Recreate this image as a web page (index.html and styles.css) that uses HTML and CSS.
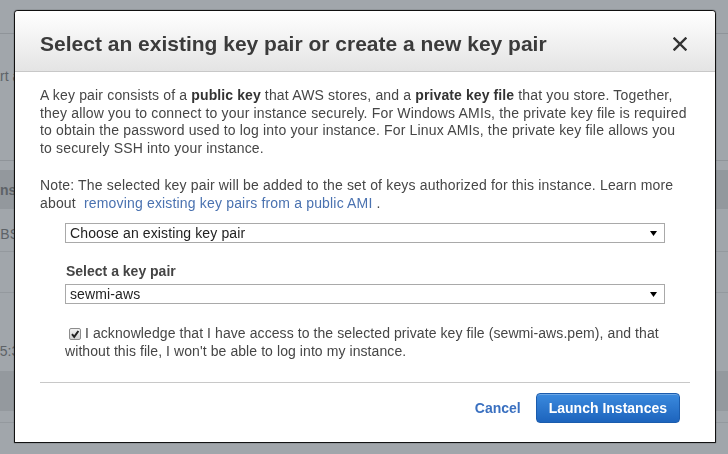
FILE: index.html
```html
<!DOCTYPE html>
<html lang="en">
<head>
<meta charset="utf-8">
<title>Select key pair</title>
<link rel="stylesheet" href="styles.css">
</head>
<body>
<div class="page">
  <div class="bg-top"></div>
  <div class="bg-sec"><span class="bg-text t1">Start a</span></div>
  <div class="bg-gap"></div>
  <div class="bg-head"><span class="bg-text bold t2">Inst</span></div>
  <div class="bg-row r1"><span class="bg-text t3">EBS</span></div>
  <div class="bg-row r2"></div>
  <div class="bg-row r3"><span class="bg-text t4">05:3</span></div>
  <div class="bg-band"></div>
  <div class="bg-row r4"></div>
</div>

<div class="overlay">
  <div class="dialog">
    <div class="dlg-header">
      <h1 class="dlg-title">Select an existing key pair or create a new key pair</h1>
      <svg class="close" width="14" height="14" viewBox="0 0 14 14" aria-label="Close">
        <path d="M1.5 1.5 L12.5 12.5 M12.5 1.5 L1.5 12.5" stroke="#333" stroke-width="2.4" stroke-linecap="square" fill="none"/>
      </svg>
    </div>
    <div class="dlg-body">
      <p class="para">A key pair consists of a <b>public key</b> that AWS stores, and a <b>private key file</b> that you store. Together, they allow you to connect to your instance securely. For Windows AMIs, the private key file is required to obtain the password used to log into your instance. For Linux AMIs, the private key file allows you to securely SSH into your instance.</p>
      <p class="para">Note: The selected key pair will be added to the set of keys authorized for this instance. Learn more about <a class="link" href="#">removing existing key pairs from a public AMI</a> .</p>
      <div class="form">
        <div class="select">
          <span>Choose an existing key pair</span>
          <svg class="arrow" width="7" height="5" viewBox="0 0 7 5"><polygon points="0,0 7,0 3.5,5" fill="#000"/></svg>
        </div>
        <div class="field-label">Select a key pair</div>
        <div class="select">
          <span>sewmi-aws</span>
          <svg class="arrow" width="7" height="5" viewBox="0 0 7 5"><polygon points="0,0 7,0 3.5,5" fill="#000"/></svg>
        </div>
        <div class="ack"><span class="checkbox"><svg width="12" height="12" viewBox="0 0 12 12"><path d="M3 6.2 L5.2 8.8 L9.4 3" stroke="#222" stroke-width="2" fill="none"/></svg></span> I acknowledge that I have access to the selected private key file (sewmi-aws.pem), and that without this file, I won't be able to log into my instance.</div>
      </div>
      <div class="dlg-footer">
        <a class="cancel" href="#">Cancel</a>
        <button class="primary" type="button">Launch Instances</button>
      </div>
    </div>
  </div>
</div>
</body>
</html>
```

FILE: styles.css
```css
html, body {
  margin: 0;
  padding: 0;
}
body {
  width: 728px;
  height: 454px;
  overflow: hidden;
  background: #a1a6ab;
  font-family: "Liberation Sans", Arial, sans-serif;
}

/* background page (dimmed) */
.page {
  display: flex;
  flex-direction: column;
}
.page > div {
  box-sizing: border-box;
}
.bg-top {
  height: 34px;
  border-bottom: 1px solid #8f9499;
}
.bg-sec {
  height: 127px;
  border-bottom: 1px solid #8f9499;
  padding-top: 34px;
}
.bg-gap {
  height: 9px;
}
.bg-head {
  height: 39px;
  background: #93989d;
  padding-top: 12px;
}
.bg-row {
  border-bottom: 1px solid #94999e;
}
.r1 { height: 43px; padding-top: 17px; }
.r2 { height: 41px; }
.r3 { height: 78px; border-bottom: none; padding-top: 50px; }
.bg-band {
  height: 40px;
  background: #94999e;
}
.r4 { height: 12px; }
.bg-text {
  display: block;
  font-size: 14px;
  line-height: 16px;
  color: #5d6267;
  white-space: nowrap;
}
.bg-text.bold { font-weight: bold; }
.t1 { text-indent: -21px; }
.t2 { text-indent: -4px; }
.t3 { text-indent: -9px; }
.t4 { text-indent: -8px; }

/* modal */
.overlay {
  position: fixed;
  inset: 0;
  padding: 10px 0 0 14px;
  display: flex;
  align-items: flex-start;
}
.dialog {
  width: 702px;
  box-sizing: border-box;
  border: 1px solid #111;
  border-radius: 4px 4px 0 0;
  background: #fff;
  box-shadow: 0 0 1px 0 rgba(0, 0, 0, 0.9);
}
.dlg-header {
  display: flex;
  justify-content: space-between;
  align-items: center;
  padding: 21px 28px 15px 25px;
  background: linear-gradient(#ffffff, #e4e4e4);
  border-bottom: 1px solid #c8c8c8;
  border-radius: 3px 3px 0 0;
}
.dlg-title {
  margin: 0;
  font-size: 21px;
  line-height: 24px;
  font-weight: bold;
  color: #3b3b3b;
}
.close {
  display: block;
}
.dlg-body {
  padding: 15px 25px 0;
}
.para {
  margin: 0 0 20px;
  font-size: 14px;
  line-height: 17.5px;
  letter-spacing: 0.17px;
  color: #464646;
}
.para:last-of-type {
  margin-bottom: 0;
}
.para b {
  color: #333;
  letter-spacing: 0.1px;
}
.link {
  color: #4a72b0;
  text-decoration: none;
  margin-left: 4px;
}
.form {
  margin: 11px 25px 0;
  width: 600px;
  font-size: 14px;
  color: #464646;
}
.select {
  box-sizing: border-box;
  height: 20px;
  border: 1px solid #a9a9a9;
  display: flex;
  justify-content: space-between;
  align-items: center;
  padding: 0 7px 0 4px;
  line-height: 18px;
  letter-spacing: 0.12px;
  color: #222;
}
.field-label {
  margin: 20px 0 3.5px 1px;
  font-weight: bold;
  line-height: 17.5px;
  color: #444;
}
.ack {
  margin-top: 21px;
  line-height: 17.5px;
  letter-spacing: 0.08px;
  color: #464646;
}
.checkbox {
  display: inline-block;
  box-sizing: border-box;
  width: 12px;
  height: 12px;
  margin-left: 4px;
  border: 1px solid #8c8c8c;
  border-radius: 2px;
  background: linear-gradient(#f2f2f2, #d2d2d2);
  vertical-align: -2px;
  position: relative;
}
.checkbox svg {
  position: absolute;
  left: -1px;
  top: -1px;
}
.dlg-footer {
  margin-top: 22px;
  border-top: 1px solid #c8c8c8;
  display: flex;
  justify-content: flex-end;
  align-items: center;
  gap: 15px;
  padding: 10px 10px 19px 0;
}
.cancel {
  font-size: 14px;
  font-weight: bold;
  color: #3a70c0;
  text-decoration: none;
}
.primary {
  box-sizing: border-box;
  height: 30px;
  padding: 0 12px;
  border: 1px solid #1b5cad;
  border-radius: 4px;
  background: linear-gradient(#3b8ade, #1d64bd);
  box-shadow: inset 0 1px 0 rgba(255, 255, 255, 0.25);
  color: #fff;
  font-family: "Liberation Sans", Arial, sans-serif;
  font-size: 14px;
  font-weight: bold;
}
```
